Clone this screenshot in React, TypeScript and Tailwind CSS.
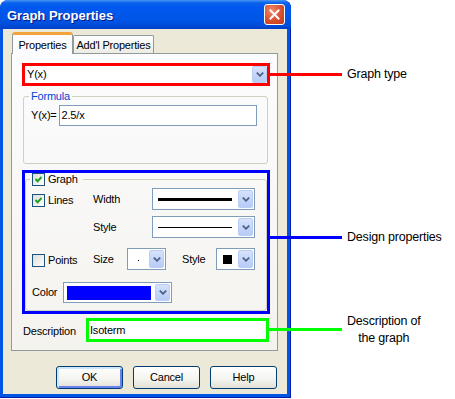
import type { ReactNode } from 'react';

function Arrow() {
  return (
    <svg width="8" height="5" viewBox="0 0 8 5" className="block">
      <path d="M0.8 0.6 L4 3.8 L7.2 0.6" fill="none" stroke="#4d6185" strokeWidth="1.8" />
    </svg>
  );
}

function DropButton() {
  return (
    <div className="flex h-full w-[15px] shrink-0 items-center justify-center rounded-[2px] border border-[#bccdf5] bg-[linear-gradient(to_bottom,#d6e2fc,#b6cbf7)]">
      <Arrow />
    </div>
  );
}

function Combo({ className, children }: { className: string; children?: ReactNode }) {
  return (
    <div className={`flex shrink-0 border border-[#7f9db9] bg-white p-px ${className}`}>
      <div className="flex flex-1 items-center">{children}</div>
      <DropButton />
    </div>
  );
}

function Checkbox({ checked }: { checked?: boolean }) {
  return (
    <div className="flex h-[13px] w-[13px] shrink-0 items-center justify-center border border-[#1c5180] bg-[linear-gradient(135deg,#dcdcd7,#ffffff)]">
      {checked && (
        <svg width="7" height="7" viewBox="0 0 7 7" className="block">
          <path d="M0.5 3 L2.6 5.2 L6.6 1" fill="none" stroke="#21a121" strokeWidth="2" />
        </svg>
      )}
    </div>
  );
}

function Button({ label, isDefault }: { label: string; isDefault?: boolean }) {
  return (
    <div
      className={`flex h-[23px] w-[67px] items-center justify-center rounded-[3px] border border-[#003c74] bg-[linear-gradient(to_bottom,#ffffff,#f3f3ef_60%,#e2dfd4)] ${
        isDefault ? 'shadow-[inset_1px_1px_0_1px_#cee7ff,inset_-1px_-1px_0_1px_#6982ee]' : ''
      }`}
    >
      {label}
    </div>
  );
}

function Callout({ top, color, children }: { top: string; color: string; children: ReactNode }) {
  return (
    <div className={`absolute left-[269px] flex items-center ${top}`}>
      <div className={`h-[3px] w-[73px] ${color}`} />
      <div className="ml-[5px] text-center text-[12.5px] leading-[16.5px]">{children}</div>
    </div>
  );
}

export default function App() {
  return (
    <div className="relative h-[399px] w-[455px] overflow-hidden bg-white font-['Liberation_Sans',Arial,sans-serif] text-[11px] tracking-[-0.2px] text-black">
      {/* Dialog window */}
      <div className="flex h-[398px] w-[291px] flex-col rounded-t-[8px] bg-[#0055e5] pb-[4px] shadow-[inset_-1px_-1px_0_#001ea8]">
        <div className="flex h-[29px] shrink-0 items-center justify-between rounded-t-[8px] bg-[linear-gradient(to_bottom,#4a94f6_0%,#0a62ec_10%,#0058ee_25%,#0055e5_70%,#004ad6_90%,#003fc4_100%)] pl-[7px] pr-[6px]">
          <span className="mt-[2px] text-[13px] font-bold tracking-normal text-white [text-shadow:1px_1px_0_#0a1883]">
            Graph Properties
          </span>
          <div className="flex h-[21px] w-[21px] items-center justify-center rounded-[3px] border border-white bg-[radial-gradient(circle_at_35%_30%,#f08a6a,#d8502f_55%,#c1391b)]">
            <svg width="11" height="11" viewBox="0 0 11 11" className="block">
              <path d="M1.5 1.5 L9.5 9.5 M9.5 1.5 L1.5 9.5" stroke="#ffffff" strokeWidth="2" strokeLinecap="square" />
            </svg>
          </div>
        </div>

        <div className="ml-[3px] mr-[4px] flex flex-1 flex-col bg-[#ece9d8] pl-[8px] pr-[9px] pt-[3px]">
          {/* Tabs */}
          <div className="flex h-[21px] items-end pl-[1px]">
            <div className="relative z-10 -mb-px flex h-[22px] w-[61px] items-start justify-center rounded-t-[3px] border-x border-t-[3px] border-x-[#919b9c] border-t-[#f3a33a] bg-[#fcfcfe] pt-[2px]">
              Properties
            </div>
            <div className="flex h-[18px] w-[81px] items-center justify-center rounded-t-[2px] border border-b-0 border-[#919b9c] bg-[linear-gradient(to_bottom,#ffffff,#ecebe6)] pt-px">
              Add'l Properties
            </div>
          </div>

          {/* Panel */}
          <div className="flex h-[298px] flex-col border border-[#919b9c] bg-[linear-gradient(to_bottom,#fcfcfe,#f4f3ee)]">
            <div className="ml-[10px] mt-[9px] flex h-[23px] w-[248px] border-[3px] border-[#ff0000] bg-white">
              <div className="flex flex-1 items-center pl-[2px]">Y(x)</div>
              <DropButton />
            </div>

            <fieldset className="ml-[11px] mt-[3px] w-[245px] rounded-[3px] border border-[#d0d0bf] pb-[37px]">
              <legend className="ml-[5px] px-[2px] leading-[14px] text-[#0046d5]">Formula</legend>
              <div className="mt-[2px] flex items-center pl-[7px]">
                <span>Y(x)=</span>
                <div className="ml-[2px] flex h-[21px] w-[198px] items-center border border-[#7f9db9] bg-white pl-[2px]">
                  2.5/x
                </div>
              </div>
            </fieldset>

            <div className="ml-[10px] mt-[6px] w-[248px] border-[3px] border-[#0000ff]">
              <fieldset className="rounded-[3px] border border-[#d0d0bf] pb-[7px]">
                <legend className="ml-[4px] flex items-center gap-[3px] pl-[2px] pr-[5px] leading-[13px]">
                  <Checkbox checked />
                  <span>Graph</span>
                </legend>

                <div className="pl-[6px]">
                  <div className="mt-[2px] flex h-[22px] items-center">
                    <div className="flex w-[61px] items-center gap-[3px] pt-[2px]">
                      <Checkbox checked />
                      <span>Lines</span>
                    </div>
                    <span className="w-[59px]">Width</span>
                    <Combo className="h-[22px] w-[103px]">
                      <div className="ml-[4px] h-[3px] w-[74px] bg-black" />
                    </Combo>
                  </div>

                  <div className="mt-[6px] flex h-[22px] items-center">
                    <div className="w-[61px]" />
                    <span className="w-[59px]">Style</span>
                    <Combo className="h-[22px] w-[103px]">
                      <div className="ml-[4px] h-px w-[74px] bg-black" />
                    </Combo>
                  </div>

                  <div className="mt-[10px] flex h-[22px] items-center">
                    <div className="flex w-[61px] items-center gap-[3px] pt-[2px]">
                      <Checkbox />
                      <span>Points</span>
                    </div>
                    <span className="w-[34px]">Size</span>
                    <Combo className="h-[22px] w-[39px]">
                      <div className="ml-[9px] mt-[2px] h-px w-px bg-black" />
                    </Combo>
                    <span className="ml-[16px] w-[34px]">Style</span>
                    <Combo className="h-[22px] w-[39px]">
                      <div className="ml-[5px] h-[9px] w-[9px] bg-black" />
                    </Combo>
                  </div>

                  <div className="mt-[12px] flex h-[21px] items-center">
                    <span className="w-[31px]">Color</span>
                    <Combo className="h-[21px] w-[109px]">
                      <div className="ml-[2px] h-[14px] w-[84px] bg-[#0000ff]" />
                    </Combo>
                  </div>
                </div>
              </fieldset>
            </div>

            <div className="ml-[11px] mt-[4px] flex items-center">
              <span className="w-[63px] pt-[2px]">Description</span>
              <div className="flex h-[24px] w-[183px] items-center border-[3px] border-[#00ff00] bg-white pl-px">
                Isoterm
              </div>
            </div>
          </div>

          {/* Buttons */}
          <div className="mt-[15px] flex justify-end gap-[10px] pr-px">
            <Button label="OK" isDefault />
            <Button label="Cancel" />
            <Button label="Help" />
          </div>
        </div>
      </div>

      {/* Callouts */}
      <Callout top="top-[66px]" color="bg-[#ff0000]">
        Graph type
      </Callout>
      <Callout top="top-[229px]" color="bg-[#0000ff]">
        Design properties
      </Callout>
      <Callout top="top-[313px]" color="bg-[#00ff00]">
        Description of
        <br />
        the graph
      </Callout>
    </div>
  );
}
